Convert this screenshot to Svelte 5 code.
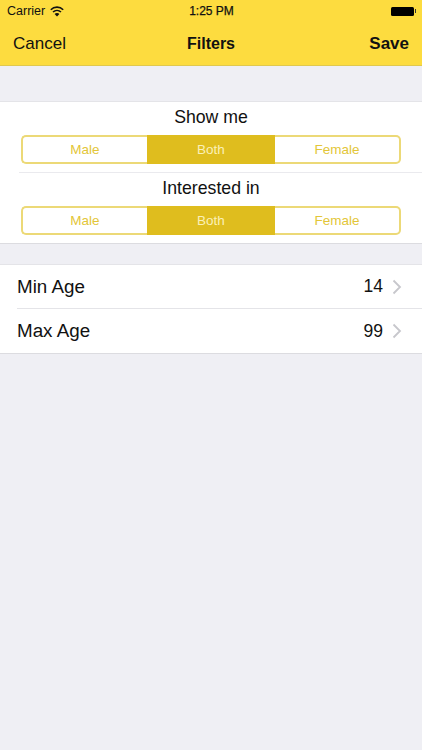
<script>
  const genders = ['Male', 'Both', 'Female'];
  const groups = ['Show me', 'Interested in'];
  const ages = [{ label: 'Min Age', value: 14 }, { label: 'Max Age', value: 99 }];
</script>

<div class="screen">
  <header class="top">
    <div class="status">
      <div class="status-left">
        <span>Carrier</span>
        <svg width="14" height="11" viewBox="0 0 14 11" aria-hidden="true">
          <path d="M.8 3.700C4.200.3 9.800.3 13.200 3.700" fill="none" stroke="#111" stroke-width="1.600"/>
          <path d="M3 6c2.300-2.100 5.700-2.100 8 0" fill="none" stroke="#111" stroke-width="1.600"/>
          <path d="M7 10.500 4.600 8c1.300-1.200 3.500-1.200 4.800 0z" fill="#111"/>
        </svg>
      </div>
      <span class="time">1:25 PM</span>
      <div class="battery"><i></i><b></b></div>
    </div>
    <nav class="nav">
      <span class="side">Cancel</span>
      <span class="title">Filters</span>
      <span class="side strong">Save</span>
    </nav>
  </header>

  <section class="card filters">
    {#each groups as g, i}
      <div class="group" class:second={i === 1}>
        <div class="caption">{g}</div>
        <div class="seg">
          {#each genders as o}
            <div class="opt" class:on={o === 'Both'}>{o}</div>
          {/each}
        </div>
      </div>
    {/each}
  </section>

  <section class="card list">
    {#each ages as a, i}
      <div class="row" class:sep={i > 0}>
        <span class="label">{a.label}</span>
        <span class="value">{a.value}</span>
        <svg class="chev" width="10" height="16" viewBox="0 0 10 16" aria-hidden="true">
          <path d="M1.500 1.500 8 8l-6.500 6.500" fill="none" stroke="#c7c7cc" stroke-width="1.800"/>
        </svg>
      </div>
    {/each}
  </section>
</div>

<style>
  :global(body) { margin: 0; }
  .screen {
    width: 422px;
    height: 750px;
    background: #efeff4;
    font-family: "Liberation Sans", Arial, sans-serif;
    color: #111;
    overflow: hidden;
  }
  .top {
    height: 65px;
    background: #fddc3f;
    border-bottom: 1px solid #e0c84e;
  }
  .status {
    height: 22px;
    display: grid;
    grid-template-columns: 1fr auto 1fr;
    align-items: center;
    padding: 0 6px 0 7px;
    font-size: 12.500px;
  }
  .status-left { display: flex; align-items: center; gap: 5px; }
  .time { -webkit-text-stroke: 0.25px #111; font-size: 12px; }
  .battery { justify-self: end; display: flex; align-items: center; }
  .battery i { width: 23px; height: 9px; background: #000; border-radius: 1.500px; }
  .battery b { width: 1.500px; height: 4px; background: #333; margin-left: 1px; }
  .nav {
    height: 43px;
    display: grid;
    grid-template-columns: 1fr auto 1fr;
    align-items: center;
    padding: 0 13px 2px;
    font-size: 17px;
  }
  .title { font-weight: 700; font-size: 16px; }
  .strong { font-weight: 700; text-align: right; }
  .card {
    background: #fff;
    border-top: 1px solid #e4e4e8;
    border-bottom: 1px solid #dcdce0;
  }
  .filters { margin-top: 35px; height: 143px; box-sizing: border-box; }
  .group { margin-left: 21px; padding-right: 21px; }
  .group.second { margin-top: 8px; margin-left: 19px; padding-left: 2px; border-top: 1px solid #eaeaee; }
  .caption {
    height: 33px;
    line-height: 31px;
    text-align: center;
    font-size: 17.700px;
  }
  .seg {
    display: grid;
    grid-template-columns: 126px 128px 1fr;
    height: 29px;
  }
  .opt {
    display: flex;
    align-items: center;
    justify-content: center;
    font-size: 13.500px;
    color: #e3c638;
    border: 2px solid #ecd977;
  }
  .opt:first-child { border-right: 0; border-radius: 5px 0 0 5px; }
  .opt:last-child { border-left: 0; border-radius: 0 5px 5px 0; }
  .opt.on { background: #dfbd1e; border-color: #dfbd1e; color: #faf0b8; }
  .list { margin-top: 20px; }
  .row {
    height: 43px;
    margin-left: 17px;
    padding-right: 20px;
    display: flex;
    align-items: center;
    font-size: 18.800px;
  }
  .row.sep { height: 44px; border-top: 1px solid #e4e4e8; }
  .label { flex: 1; }
  .value { margin-right: 9px; font-size: 17.500px; }
  .chev { display: block; }
</style>
